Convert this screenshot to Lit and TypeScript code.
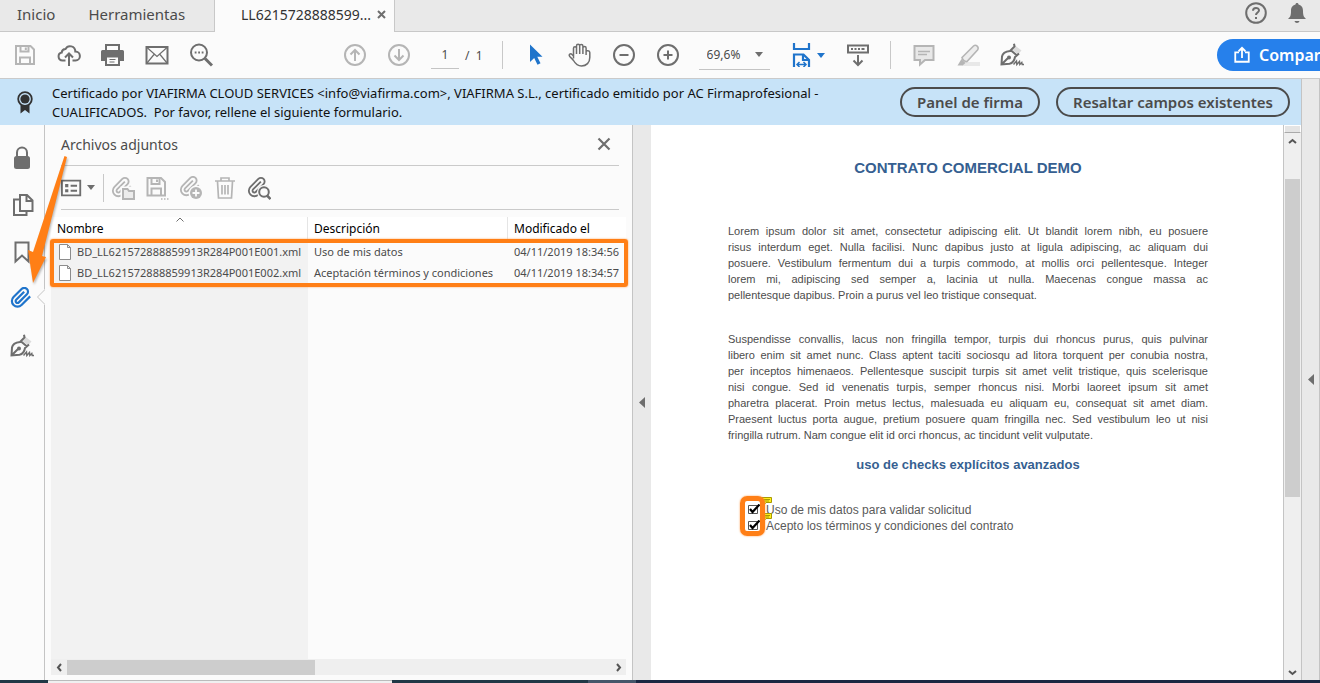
import { LitElement, html, css, svg } from "lit";
import type { SVGTemplateResult } from "lit";
import { customElement, state } from "lit/decorators.js";

const clipPath = "M21.440 11.050l-9.190 9.190a6 6 0 0 1-8.490-8.490l8.570-8.570A4 4 0 1 1 18 8.840l-8.590 8.570a2 2 0 0 1-2.830-2.830l8.490-8.480";

const icons: Record<string, SVGTemplateResult> = {
  save: svg`<path d="M3 3h14.500L21 6.500V21H3z"/><path d="M7.500 3v5.500h8V3M12.800 4.500v2.500M7 21v-6.500h10V21"/>`,
  cloud: svg`<path d="M8.500 17.500H5.500a4 4 0 0 1-.8-7.900A4 4 0 0 1 8.500 6a5.200 5.200 0 0 1 9.800 2.500 4.500 4.500 0 0 1 .2 9H15.500" /><path d="M12 23V10.500M8 14.500l4-4 4 4"/>`,
  print: svg`<path d="M5 7V2h13v5" /><path d="M0 8.500q0-1.500 1.500-1.500h20q1.500 0 1.500 1.500v9.500h-4v-4H4v4H0z" fill="currentColor" stroke="none"/><path d="M5 13.500h13V22H5z" fill="#fbfbfb"/><path d="M8.500 16.500h6M8.500 19h5" stroke-width="1.200"/>`,
  mail: svg`<path d="M1.500 4h21v16.500h-21z"/><path d="M2 4.500l10 9 10-9M2 20l7-8.500M22 20l-7-8.500" stroke-width="1.200"/>`,
  find: svg`<circle cx="10" cy="9.500" r="8"/><path d="M16 15.500l7 7" stroke-width="3"/><path d="M5.700 9.500h1.800M9.200 9.500h1.800M12.700 9.500h1.800" stroke-width="1.800"/>`,
  up: svg`<circle cx="12" cy="12" r="10"/><path d="M12 18V7M7.500 11.500L12 7l4.500 4.500"/>`,
  down: svg`<circle cx="12" cy="12" r="10"/><path d="M12 6v11M7.500 12.500L12 17l4.500-4.500"/>`,
  cursor: svg`<path d="M6 1.500v17.500l4.200-4 3.300 6.800 3-1.500-3.200-6.500H18.500z" fill="currentColor" stroke="none"/>`,
  hand: svg`<path d="M5.500 15.500V5.200c0-2 3-2 3 0V11M8.500 11V3c0-2.200 3.200-2.200 3.200 0V11M11.700 11V3c0-2.200 3.200-2 3.200 0V11M14.900 11V5c0-2 3.200-2 3.200 0V12M18.100 9c0-2 3.700-1.800 3.700.5v5c0 5-3.300 8.500-8.300 8.500-4 0-6-2-8-5.500l-3.700-4c-1.500-2 .8-3.500 2.200-2l1.500 1.500" stroke-width="1.500"/>`,
  minus: svg`<circle cx="12" cy="12" r="10"/><path d="M7.500 12h9"/>`,
  plus: svg`<circle cx="12" cy="12" r="10"/><path d="M7.500 12h9M12 7.500v9"/>`,
  fit: svg`<path d="M4 0v6h15V0M4 24V11.500h9.500L19 17v7M13 11.500V17h6" stroke-width="2.200"/><path d="M7 21.500h9M9.500 19L7 21.500 9.500 24M13.500 19l2.500 2.500-2.500 2.500" stroke-width="1.500"/>`,
  scroll: svg`<path d="M2 2.500h20v7H2z" stroke-width="2"/><path d="M5 6h2M8.500 6h2M12 6h2M15.500 6h3" stroke-width="2"/><path d="M12 12v9.500M7.500 17.500L12 22l4.500-4.500"/>`,
  comment: svg`<path d="M2.500 3h19v14H13l-5 4.500V17H2.500z" fill="#e8e8e8"/><path d="M6 8.500h12M6 11.500h9" stroke-width="1.300"/>`,
  marker: svg`<path d="M8 19h16v4H6z" fill="#e8e8e8" stroke="none"/><path d="M6 14.500L17.500 3c2.500-2 6 1 4 4L11 18.500c-2 .5-4.500-1.500-5-4z" fill="#ededed" stroke-width="1.600"/><path d="M5.500 16l4 4-3 2.500H1.500z" fill="currentColor" stroke="none"/>`,
  sign: svg`<path d="M14.500 2l7 5.500-3.500 4-6-5z" fill="#dcdcdc" stroke="none"/><path d="M14 .8l.5 2.700-4.500 4.500C6 8.500 2.500 10.500 2 13.500L1.500 21.500l8-.8c3.500-.7 5-3.700 5.500-6.700l4-3.500M10.500 7l6.500 5.500M2 21l6-6"/><circle cx="9" cy="14.500" r="1" fill="currentColor"/><path d="M13.500 21.500l3-3.500.3 3.500 2.700-3 .3 3 2-2 .4 2H24" stroke-width="1.400"/>`,
  share: svg`<path d="M8 8.500H3v12.500h18V8.500h-5M12 16V3M7.500 7L12 2.500 16.500 7" stroke-width="2.400"/>`,
  help: svg`<circle cx="12" cy="12" r="9.800"/><path d="M9 9.800c0-4 6-3.600 6-.5 0 2.200-3 2.200-3 4.700M12 16v2"/>`,
  bell: svg`<path d="M12 2c1 0 1.500.7 1.500 1.600C17 4.500 18 7 18 10c0 5 1 6 3 8H3c2-2 3-3 3-8 0-3 1-5.500 4.500-6.400C10.500 2.700 11 2 12 2zM9.500 20h5c-.5 2.500-4.500 2.500-5 0z" fill="currentColor" stroke="none"/>`,
  medal: svg`<path d="M7.500 14h9v9.500L12 20l-4.500 3.500z" fill="currentColor" stroke="none"/><circle cx="12" cy="9" r="6.800" fill="#c7e3f8" stroke-width="1.800"/><circle cx="12" cy="9" r="4.600" fill="currentColor" stroke="none"/>`,
  lock: svg`<path d="M7 11V6.500a5 5 0 0 1 10 0V11"/><rect x="4" y="10" width="16" height="13" rx="2.500" fill="currentColor" stroke="none"/>`,
  pages: svg`<path d="M10 2h7l5.500 5.500V18H10zM16.500 2v6H22.500M10 6.500H4V22h12.500v-4"/>`,
  bookmark: svg`<path d="M5.500 2.500h13v19L12 15.500l-6.500 6z"/>`,
  clip: svg`<path d=${clipPath} transform="translate(0 -1) scale(.94)" stroke-width="2.300"/>`,
  list: svg`<path d="M1 4h20v16H1z"/><path d="M4.500 9.500h3.500M4.500 15h3.500" stroke-width="3.500"/><path d="M10.500 9.500h7M10.500 15h7"/>`,
  clipFolder: svg`<path d=${clipPath} transform="scale(.92)"/><path d="M9.500 10.500H24V24H9.500z" fill="#fbfbfb" stroke="none"/><path d="M12 13h4.500l1.500 2h5v8H12z" fill="#ececec"/>`,
  saveAs: svg`<path d="M2.500 2h13.500l4 4v13.500H2.500z"/><path d="M6.500 2v6h8V2M12 3.500v2.500M6.500 19v-6.500h9.500V19"/><path d="M16 23h1.500M19 23h1.500M22 23h1.500" stroke-width="1.700"/>`,
  clipAdd: svg`<path d=${clipPath} transform="translate(0 -1) scale(.92)"/><circle cx="17" cy="17" r="7.500" fill="#fbfbfb" stroke="none"/><circle cx="17" cy="17" r="6" fill="currentColor" stroke="none"/><path d="M13.500 17h7M17 13.500v7" stroke="#fbfbfb" stroke-width="1.800"/>`,
  trash: svg`<path d="M2 5h20M8 4.500V2h8v2.500M4.500 5.500L5.500 22h13l1-16.500M9 9v9.500M12 9v9.500M15 9v9.500" stroke-width="1.700"/>`,
  clipFind: svg`<path d=${clipPath} transform="scale(.92)"/><circle cx="17" cy="16" r="7" fill="#fbfbfb" stroke="none"/><circle cx="17" cy="16" r="4.800"/><path d="M20 19.500l3.500 3.500" stroke-width="2.500"/>`,
};

const icon = (name: string, size = 24) => html`<svg class="icon" width=${size} height=${size}
  viewBox="0 0 24 24" aria-hidden="true">${icons[name]}</svg>`;
const caret = html`<svg class="caret" width="8" height="5" viewBox="0 0 8 5" aria-hidden="true"><path d="M0 0h8L4 5z"/></svg>`;

interface Attachment { name: string; description: string; modified: string; }

/* The contract is a fixed-format page: its line breaks belong to the document. */
const clauses: string[][] = [
  [
    "Lorem ipsum dolor sit amet, consectetur adipiscing elit. Ut blandit lorem nibh, eu posuere",
    "risus interdum eget. Nulla facilisi. Nunc dapibus justo at ligula adipiscing, ac aliquam dui",
    "posuere. Vestibulum fermentum dui a turpis commodo, at mollis orci pellentesque. Integer",
    "lorem mi, adipiscing sed semper a, lacinia ut nulla. Maecenas congue massa ac",
    "pellentesque dapibus. Proin a purus vel leo tristique consequat.",
  ],
  [
    "Suspendisse convallis, lacus non fringilla tempor, turpis dui rhoncus purus, quis pulvinar",
    "libero enim sit amet nunc. Class aptent taciti sociosqu ad litora torquent per conubia nostra,",
    "per inceptos himenaeos. Pellentesque suscipit turpis sit amet velit tristique, quis scelerisque",
    "nisi congue. Sed id venenatis turpis, semper rhoncus nisi. Morbi laoreet ipsum sit amet",
    "pharetra placerat. Proin metus lectus, malesuada eu aliquam eu, consequat sit amet diam.",
    "Praesent luctus porta augue, pretium posuere quam fringilla nec. Sed vestibulum leo ut nisi",
    "fringilla rutrum. Nam congue elit id orci rhoncus, ac tincidunt velit vulputate.",
  ],
];

@customElement("app-root")
export class AppRoot extends LitElement {
  @state() private attachments: Attachment[] = [
    { name: "BD_LL621572888859913R284P001E001.xml", description: "Uso de mis datos", modified: "04/11/2019 18:34:56" },
    { name: "BD_LL621572888859913R284P001E002.xml", description: "Aceptación términos y condiciones", modified: "04/11/2019 18:34:57" },
  ];

  static styles = css`
    :host {
      display: flex; flex-direction: column; height: 100vh; overflow: hidden;
      font-family: "Noto Sans", "Open Sans", sans-serif; font-size: 12px;
      color: #4b4b4b; background: #fbfbfb;
    }
    * { box-sizing: border-box; }
    button, input, select { font: inherit; color: inherit; background: none; border: 0; padding: 0; margin: 0; }
    svg { display: block; flex: none; }
    .icon { fill: none; stroke: currentColor; stroke-width: 2; }
    .caret { fill: #6e6e6e; }
    .tool { display: flex; align-items: center; justify-content: center; width: 44px; height: 44px; flex: none; color: #6e6e6e; }
    .tool.off { color: #b5b5b5; }
    .tool.on { color: #1f74cb; }
    .tool.on .caret { fill: #1f74cb; }

    .tabs { display: flex; flex: none; height: 32px; background: #e9e9e9; font-size: 15px; }
    .tabs .home { display: flex; flex: none; gap: 33px; width: 215px; padding-left: 17px; border-bottom: 1px solid #c8c8c8; border-right: 1px solid #c8c8c8; }
    .tabs button { line-height: 28px; padding-bottom: 3px; }
    .doc-tab { display: flex; flex: none; align-items: center; gap: 6px; width: 179px; padding-left: 26px; padding-bottom: 4px; background: #fbfbfb; font-size: 14px; color: #323232; }
    .tabs .close { padding: 0; }
    .rest { display: flex; flex: 1; justify-content: flex-end; align-items: center; gap: 17px; padding: 0 11px 2px 0; border-left: 1px solid #c8c8c8; border-bottom: 1px solid #c8c8c8; color: #6e6e6e; }

    .toolbar { display: flex; flex: none; align-items: center; height: 47px; padding-left: 3px; border-bottom: 1px solid #cacaca; overflow: hidden; }
    .nav { display: flex; align-items: center; margin-left: 110px; }
    .page-box { width: 28px; height: 28px; margin-left: 10px; border-bottom: 1px solid #c4c4c4; text-align: center; }
    .total { padding-left: 6px; white-space: pre; }
    .sep { flex: none; width: 1px; height: 28px; background: #c8c8c8; margin: 0 11px 0 19px; }
    .sep.narrow { margin-left: 10px; }
    .zoom { position: relative; display: flex; align-items: center; width: 71px; margin: 0 10px 0 9px; border-bottom: 1px solid #c4c4c4; }
    .zoom select { appearance: none; width: 71px; height: 28px; padding-left: 8px; }
    .zoom .caret { position: absolute; right: 7px; pointer-events: none; }
    .fit { gap: 3px; width: 56px; }
    .share { display: flex; flex: none; align-items: center; gap: 8px; width: 136px; height: 32px; margin: 0 -33px 0 auto; padding-left: 16px; border-radius: 16px; background: #2680eb; color: #fff; font-size: 16px; font-weight: 600; }

    .body { display: flex; flex: 1; min-height: 0; }
    .main { display: flex; flex: 1; flex-direction: column; min-width: 0; }
    .tools-pane { display: flex; align-items: center; justify-content: center; width: 19px; flex: none; background: #e9e9e9; border-left: 1px solid #c4c4c4; border-right: 1px solid #c4c4c4; }
    .tri { fill: #6e6e6e; }

    .banner { display: flex; flex: none; align-items: center; height: 46px; gap: 16px; padding-right: 11px; background: #c7e3f8; }
    .banner .medal { width: 36px; padding-left: 13px; color: #323232; }
    .banner p { flex: 1; margin: 0; padding-top: 2px; font-size: 13px; line-height: 19px; color: #111; white-space: pre-wrap; }
    .pill { flex: none; height: 30px; padding: 0 15px; border: 2px solid #4b4b4b; border-radius: 15px; font-size: 15px; font-weight: 600; line-height: 24px; }

    .content { display: flex; flex: 1; min-height: 0; }
    .rail { position: relative; display: flex; flex: none; flex-direction: column; gap: 3px; width: 45px; padding-top: 11px; border-right: 1px solid #c4c4c4; }
    .notch { position: absolute; left: 36px; top: 164px; }
    .panel { display: flex; flex: none; flex-direction: column; width: 588px; padding: 0 6px 5px; border-right: 1px solid #c4c4c4; }
    .panel header { display: flex; justify-content: space-between; align-items: center; height: 41px; margin: 0 7px 0 10px; padding: 0 8px 2px 0; border-bottom: 1px solid #cacaca; }
    h2 { margin: 0; font-size: 14px; font-weight: 400; }
    .panel-tools { display: flex; align-items: center; height: 44px; margin: 0 7px 7px 10px; border-bottom: 1px solid #cacaca; }
    .panel-tools .tool { width: 34px; }
    .panel-tools .view { gap: 4px; width: 34px; justify-content: flex-start; }
    .panel-tools .sep { margin: 0 2px 0 8px; }
    .files { flex: 1; min-height: 0; position: relative; background: linear-gradient(#f2f2f2, #f2f2f2) 0 0 / 257px 100% no-repeat; }
    table { width: 100%; border-collapse: separate; border-spacing: 0; table-layout: fixed; font-size: 11px; }
    .c1 { width: 257px; }
    .c2 { width: 200px; }
    th { position: relative; height: 24px; padding: 0 6px 2px; background: #fff; color: #000; text-align: left; font-size: 12px; font-weight: 400; border-right: 1px solid #e5e5e5; }
    th:last-child { border-right: 0; }
    .sort { position: absolute; left: 125px; top: 0; fill: none; stroke: #6e6e6e; }
    td { height: 21px; padding: 0 6px; white-space: nowrap; }
    .file { display: flex; align-items: center; gap: 6px; margin-left: 2px; }
    .page { fill: #fff; stroke: #8c8c8c; }
    .frame { position: absolute; border: 4px solid #ff7f16; border-radius: 3px; box-shadow: 0 0 2px #ff9a48; pointer-events: none; }
    .files .frame { left: -1px; right: -2px; top: 22px; height: 48px; }
    .hscroll { display: flex; flex: none; align-items: center; height: 16px; background: #efefef; }
    .hscroll .track { flex: 1; height: 15px; }
    .hscroll .thumb { width: 248px; height: 15px; background: #cdcdcd; }
    .arrow { width: 16px; height: 16px; display: flex; align-items: center; justify-content: center; }
    .chev { fill: none; stroke: #555; stroke-width: 2; }
    .splitter { display: flex; flex: none; align-items: center; justify-content: center; width: 18px; background: #e9e9e9; }
    .callout { position: absolute; left: 24px; top: 28px; z-index: 2; pointer-events: none; filter: drop-shadow(1px 2px 1px #0004); }

    .viewer { flex: 1; min-width: 0; overflow: hidden; background: #fff; font-family: "Liberation Sans", Arial, sans-serif; font-size: 12px; color: #5a5a5a; }
    article { width: 482px; margin: 0 auto; padding: 34px 0 0 2px; }
    h1, h3 { margin: 0; text-align: center; color: #365f91; }
    h1 { font-size: 15px; line-height: 18px; margin-bottom: 46px; }
    h3 { font-size: 13px; line-height: 16px; margin-bottom: 29px; }
    article p { margin: 0 0 28px; font-size: 11px; line-height: 16px; color: #4c4c4c; }
    article p:last-of-type { margin-bottom: 14px; }
    .line { display: block; white-space: nowrap; text-align-last: justify; }
    .line:last-child { text-align-last: left; }
    .checks { position: relative; padding-left: 20px; }
    .checks label { position: relative; z-index: 0; display: flex; align-items: center; gap: 6px; height: 16px; }
    .checks input { appearance: none; position: relative; width: 12px; height: 10px; flex: none; }
    .tick { position: absolute; left: 0; top: 2px; pointer-events: none; }
    .note { position: absolute; left: 13px; top: -5px; z-index: -1; }
    .checks .frame { left: 12px; top: -6px; width: 25px; height: 40px; border-width: 5px; border-radius: 7px; }
    .vscroll { display: flex; flex: none; flex-direction: column; width: 18px; background: #efefef; border-left: 1px solid #c4c4c4; align-items: center; }
    .vscroll .split { width: 17px; height: 8px; background: #e4e4e4; border: 1px solid #fff; border-bottom-color: #aaa; }
    .vscroll .track { flex: 1; width: 15px; padding-top: 30px; }
    .vscroll .thumb { width: 15px; height: 318px; background: #cdcdcd; }
    .taskbar { display: flex; flex: none; height: 3px; background: #1a2742; }
    .taskbar .edge { width: 48px; background: #203846; }
    .taskbar .window { width: 344px; background: #f0f0f0; border-top: 1px solid #bbb; }
    .taskbar .mid { width: 196px; background: #203846; }
    .taskbar .light { width: 48px; background: #45566a; }
  `;

  private tool(name: string, label: string, mode = "", size = 24) {
    return html`<button class="tool ${mode}" aria-label=${label}>${icon(name, size)}</button>`;
  }

  private check(label: string) {
    return html`<label>
      <svg class="note" width="11" height="9" viewBox="0 0 11 9" aria-hidden="true"><path d="M.5.500h10v5H5L3 8V5.500H.5z" fill="#ffef1a" stroke="#a89a00"/><path d="M2 2.500h7M2 4h6" stroke="#a89a00"/></svg>
      <input type="checkbox" checked />
      <svg class="tick" width="13" height="11" viewBox="0 0 13 11" aria-hidden="true"><path d="M.5 1.500h9v8H.5z" fill="#fff" stroke="#555"/><path d="M2 5l2.500 3L11.500 .5" fill="none" stroke="#000" stroke-width="2.200"/></svg>
      <span>${label}</span></label>`;
  }

  private chevron(d: string) {
    return html`<span class="arrow"><svg class="chev" width="9" height="9" viewBox="0 0 9 9" aria-hidden="true"><path d=${d}/></svg></span>`;
  }

  private triangle() {
    return html`<svg class="tri" width="6" height="11" viewBox="0 0 6 11" aria-hidden="true"><path d="M6 0v11L0 5.500z"/></svg>`;
  }

  render() {
    return html`
      <nav class="tabs">
        <div class="home"><button>Inicio</button><button>Herramientas</button></div>
        <div class="doc-tab"><span>LL6215728888599...</span>
          <button class="close" aria-label="Cerrar pestaña"><svg width="9" height="9" viewBox="0 0 9 9"><path d="M1 1l7 7M8 1L1 8" stroke="#6e6e6e" stroke-width="2"/></svg></button></div>
        <div class="rest">
          <button aria-label="Ayuda">${icon("help")}</button><button aria-label="Notificaciones">${icon("bell")}</button>
        </div>
      </nav>
      <div class="toolbar">
        ${this.tool("save", "Guardar", "off")}${this.tool("cloud", "Subir")}${this.tool("print", "Imprimir")}${this.tool("mail", "Enviar")}${this.tool("find", "Buscar")}
        <div class="nav">
          ${this.tool("up", "Página anterior", "off")}${this.tool("down", "Página siguiente", "off")}
          <input class="page-box" aria-label="Página" .value=${"1"} /><span class="total">/  1</span>
        </div>
        <span class="sep"></span>
        ${this.tool("cursor", "Seleccionar", "on")}${this.tool("hand", "Mano")}${this.tool("minus", "Reducir")}${this.tool("plus", "Ampliar")}
        <div class="zoom"><select aria-label="Zoom"><option>69,6%</option></select>${caret}</div>
        <button class="tool on fit" aria-label="Ajustar">${icon("fit")}${caret}</button>
        ${this.tool("scroll", "Desplazamiento")}
        <span class="sep narrow"></span>
        ${this.tool("comment", "Comentar", "off")}${this.tool("marker", "Resaltar", "off")}${this.tool("sign", "Firmar")}
        <button class="share">${icon("share", 18)}Compartir</button>
      </div>
      <div class="body">
        <div class="main">
          <div class="banner">
            <span class="medal">${icon("medal")}</span>
            <p>Certificado por VIAFIRMA CLOUD SERVICES &lt;info@viafirma.com&gt;, VIAFIRMA S.L., certificado emitido por AC Firmaprofesional - CUALIFICADOS.  Por favor, rellene el siguiente formulario.</p>
            <button class="pill">Panel de firma</button>
            <button class="pill">Resaltar campos existentes</button>
          </div>
          <div class="content">
            <nav class="rail">
              ${this.tool("lock", "Seguridad")}${this.tool("pages", "Páginas")}${this.tool("bookmark", "Marcadores")}${this.tool("clip", "Archivos adjuntos", "on")}${this.tool("sign", "Firmas")}
              <svg class="notch" width="9" height="16" viewBox="0 0 9 16" aria-hidden="true"><path d="M9 0L1 8l8 8z" fill="#fbfbfb"/><path d="M8.500 1L1.500 8l7 7" fill="none" stroke="#c4c4c4"/></svg>
              <svg class="callout" width="48" height="134" viewBox="0 0 48 134" aria-hidden="true"><path d="M40.500 3L43 4 18 103l4 1-13 26L4 97l5 2z" fill="#ff7f16"/></svg>
            </nav>
            <section class="panel">
              <header><h2>Archivos adjuntos</h2>
                <button aria-label="Cerrar panel"><svg width="14" height="14" viewBox="0 0 14 14"><path d="M1.500 1.500l11 11M12.500 1.500l-11 11" stroke="#6e6e6e" stroke-width="2.200"/></svg></button></header>
              <div class="panel-tools">
                <button class="tool view" aria-label="Opciones">${icon("list", 22)}${caret}</button><span class="sep"></span>
                ${this.tool("clipFolder", "Abrir archivo", "off")}${this.tool("saveAs", "Guardar archivo", "off")}${this.tool("clipAdd", "Agregar archivo", "off")}${this.tool("trash", "Eliminar archivo", "off")}${this.tool("clipFind", "Buscar archivos")}
              </div>
              <div class="files">
                <table>
                  <colgroup><col class="c1" /><col class="c2" /><col /></colgroup>
                  <thead><tr>
                    <th>Nombre<svg class="sort" width="8" height="5" viewBox="0 0 8 5" aria-hidden="true"><path d="M.5 4.500L4 1l3.500 3.500"/></svg></th>
                    <th>Descripción</th><th>Modificado el</th>
                  </tr></thead>
                  <tbody>
                    ${this.attachments.map((a) => html`<tr>
                      <td><span class="file"><svg class="page" width="12" height="16" viewBox="0 0 12 16" aria-hidden="true"><path d="M.5.500h8l3 3v12H.5zM8.500.500v3h3"/></svg>${a.name}</span></td>
                      <td>${a.description}</td><td>${a.modified}</td></tr>`)}
                  </tbody>
                </table>
                <div class="frame"></div>
              </div>
              <div class="hscroll">${this.chevron("M6 1L3 4.500 6 8")}<div class="track"><div class="thumb"></div></div>${this.chevron("M3 1l3 3.500L3 8")}</div>
            </section>
            <div class="splitter">${this.triangle()}</div>
            <main class="viewer">
              <article>
                <h1>CONTRATO COMERCIAL DEMO</h1>
                ${clauses.map((lines) => html`<p>${lines.map((line) => html`<span class="line">${line}</span>`)}</p>`)}
                <h3>uso de checks explícitos avanzados</h3>
                <div class="checks">
                  ${this.check("Uso de mis datos para validar solicitud")}
                  ${this.check("Acepto los términos y condiciones del contrato")}
                  <div class="frame"></div>
                </div>
              </article>
            </main>
            <div class="vscroll"><div class="split"></div>${this.chevron("M1 6l3.500-3L8 6")}<div class="track"><div class="thumb"></div></div>${this.chevron("M1 3l3.500 3L8 3")}</div>
          </div>
        </div>
        <div class="tools-pane">${this.triangle()}</div>
      </div>
      <div class="taskbar"><span class="edge"></span><span class="window"></span><span class="mid"></span><span class="light"></span></div>
    `;
  }
}
